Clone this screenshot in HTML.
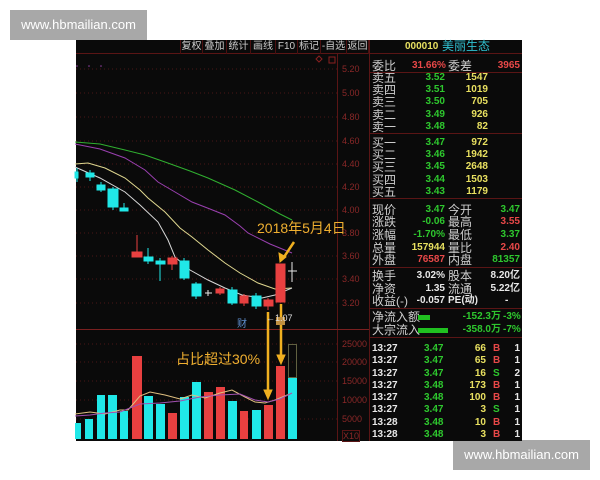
<!DOCTYPE html>
<html><head><meta charset="utf-8"><style>
*{margin:0;padding:0;box-sizing:border-box}
body{width:600px;height:480px;background:#fff;position:relative;overflow:hidden;font-family:"Liberation Sans","Noto Sans CJK SC",sans-serif}
.wm{position:absolute;background:#a8a8a8;color:#fff;font-size:13px;text-align:center;line-height:30px;width:137px;height:30px}
#panel{position:absolute;left:76px;top:40px;width:446px;height:401px;background:#0a0a0a}
.t{position:absolute;white-space:nowrap;font-size:10px;line-height:12px}
.l{color:#cfcfcf;font-size:12px;line-height:12px}
.n{font-weight:bold;font-size:10px}
.g{color:#2ec82e}.r{color:#e84848}.y{color:#e8e060}.w{color:#e8e8e8}
.ax{position:absolute;left:342px;font-size:9px;color:#8a2828;line-height:10px}
.tb{position:absolute;top:40px;height:14px;font-size:10px;color:#ccc;line-height:14px;border-right:1px solid #4a1010;text-align:center;white-space:nowrap;overflow:visible}
</style></head><body>
<div class="wm" style="left:10px;top:10px">www.hbmailian.com</div>
<div class="wm" style="left:453px;top:440px">www.hbmailian.com</div>
<div id="panel"></div>
<svg style="position:absolute;left:0;top:0" width="600" height="480">
<g stroke="#5a1515" stroke-width="1">
<line x1="76" y1="53.5" x2="522" y2="53.5"/>
<line x1="337.5" y1="53" x2="337.5" y2="441"/>
<line x1="369.5" y1="40" x2="369.5" y2="441"/>
<line x1="76" y1="329.5" x2="369" y2="329.5" stroke="#7a2020"/>
<line x1="370" y1="72.5" x2="522" y2="72.5"/>
<line x1="370" y1="133.5" x2="522" y2="133.5"/>
<line x1="370" y1="198.5" x2="522" y2="198.5"/>
<line x1="370" y1="267.5" x2="522" y2="267.5"/>
<line x1="370" y1="308.5" x2="522" y2="308.5"/>
<line x1="370" y1="337.5" x2="522" y2="337.5"/>
</g>
<g stroke="#4a1515" stroke-dasharray="1,3">
<line x1="76" y1="69" x2="337" y2="69"/><line x1="76" y1="93" x2="337" y2="93"/>
<line x1="76" y1="117" x2="337" y2="117"/><line x1="76" y1="141" x2="337" y2="141"/>
<line x1="76" y1="164" x2="337" y2="164"/><line x1="76" y1="187" x2="337" y2="187"/>
<line x1="76" y1="210" x2="337" y2="210"/><line x1="76" y1="233" x2="337" y2="233"/>
<line x1="76" y1="256" x2="337" y2="256"/><line x1="76" y1="279" x2="337" y2="279"/>
<line x1="76" y1="303" x2="337" y2="303"/>
<line x1="76" y1="344" x2="337" y2="344"/><line x1="76" y1="362" x2="337" y2="362"/>
<line x1="76" y1="381" x2="337" y2="381"/><line x1="76" y1="400" x2="337" y2="400"/>
<line x1="76" y1="419" x2="337" y2="419"/>
</g>
<g fill="#9040a0"><circle cx="77" cy="66" r="0.8"/><circle cx="89" cy="66" r="0.8"/><circle cx="101" cy="66" r="0.8"/></g>
<rect x="329" y="57" width="6" height="6" fill="none" stroke="#8a2020"/>
<path d="M319 56l3 3-3 3-3-3z" fill="none" stroke="#8a2020"/>
<polyline fill="none" stroke="#30b030" points="75,142 100,144 125,150 145,155 165,162 190,171 208,178 235,190 258,202 280,214 292,220"/>
<polyline fill="none" stroke="#9a40b0" points="75,144 100,149 125,158 145,170 158,182 175,192 192,202 210,209 225,215 240,226 248,233 270,244 292,253"/>
<polyline fill="none" stroke="#e0d890" points="75,164 88,163 105,168 125,178 140,190 148,198 165,212 180,228 192,237 208,250 225,263 240,273 258,283 275,289 292,288"/>
<polyline fill="none" stroke="#d8d8d8" points="75,167 100,178 125,192 140,205 158,222 168,240 175,257 190,270 208,280 225,288 242,295 262,298 275,295 292,288"/>
<g stroke-width="1">
<g stroke="#20e8e8" fill="#20e8e8">
<rect x="75" y="172" width="3" height="6"/><line x1="77" y1="168" x2="77" y2="182"/>
<rect x="86" y="173" width="8" height="4"/><line x1="90" y1="170" x2="90" y2="181"/>
<rect x="97" y="185" width="8" height="5"/><line x1="101" y1="182" x2="101" y2="192"/>
<rect x="108" y="189" width="10" height="18"/><line x1="113" y1="187" x2="113" y2="210"/>
<rect x="120" y="208" width="8" height="3"/><line x1="124" y1="203" x2="124" y2="211"/>
<rect x="144" y="257" width="9" height="4"/><line x1="148" y1="248" x2="148" y2="264"/>
<rect x="156" y="261" width="9" height="3"/><line x1="160" y1="258" x2="160" y2="281"/>
<rect x="180" y="261" width="9" height="17"/><line x1="184" y1="258" x2="184" y2="280"/>
<rect x="192" y="284" width="9" height="12"/><line x1="196" y1="282" x2="196" y2="299"/>
<rect x="228" y="290" width="9" height="13"/><line x1="232" y1="287" x2="232" y2="305"/>
<rect x="252" y="296" width="9" height="10"/><line x1="256" y1="293" x2="256" y2="309"/>
</g>
<g stroke="#e84040" fill="#e84040">
<rect x="132" y="252" width="10" height="5"/><line x1="137" y1="235" x2="137" y2="257"/>
<rect x="168" y="258" width="9" height="6"/><line x1="172" y1="256" x2="172" y2="270"/>
<rect x="216" y="289" width="8" height="4"/><line x1="220" y1="287" x2="220" y2="295"/>
<rect x="240" y="296" width="8" height="7"/><line x1="244" y1="294" x2="244" y2="306"/>
<rect x="264" y="300" width="9" height="6"/><line x1="268" y1="298" x2="268" y2="310"/>
<rect x="276" y="264" width="9" height="38"/>
</g>
<g stroke="#e8e8e8"><line x1="205" y1="293" x2="212" y2="293"/><line x1="208" y1="290" x2="208" y2="296"/>
<line x1="288" y1="271" x2="297" y2="271"/><line x1="292" y1="262" x2="292" y2="282"/></g>
</g>
<g fill="#20e8e8">
<rect x="75" y="423" width="6" height="16"/><rect x="85" y="419" width="8" height="20"/>
<rect x="97" y="395" width="8" height="44"/><rect x="108" y="395" width="9" height="44"/>
<rect x="120" y="411" width="8" height="28"/><rect x="144" y="396" width="9" height="43"/>
<rect x="156" y="404" width="9" height="35"/><rect x="180" y="397" width="9" height="42"/>
<rect x="192" y="382" width="9" height="57"/><rect x="228" y="401" width="9" height="38"/>
<rect x="252" y="410" width="9" height="29"/><rect x="288" y="377" width="9" height="62"/>
</g>
<g fill="#e84040">
<rect x="132" y="356" width="10" height="83"/><rect x="168" y="413" width="9" height="26"/>
<rect x="204" y="392" width="9" height="47"/><rect x="216" y="387" width="9" height="52"/>
<rect x="240" y="411" width="8" height="28"/><rect x="264" y="405" width="9" height="34"/>
<rect x="276" y="366" width="9" height="73"/>
</g>
<rect x="288.5" y="344.5" width="8" height="33" fill="none" stroke="#606040"/>
<polyline fill="none" stroke="#e0c080" points="75,414 90,412 105,414 120,410 128,410 140,396 150,392 165,395 180,399 192,395 205,398 220,393 232,390 245,397 255,402 265,403 275,400 292,393"/>
<polyline fill="none" stroke="#a050b0" points="75,416 90,415 105,413 120,412 130,408 140,404 160,403 180,401 200,397 220,395 240,394 255,400 268,402 280,399 292,393"/>
<g stroke="#f0b020" fill="#f0b020" stroke-width="2.5">
<line x1="294" y1="242" x2="284" y2="257"/><path d="M280 262l-1-9 7 4z" stroke-width="1"/>
<line x1="268" y1="312" x2="268" y2="392"/><path d="M264 390l4 9 4-9z" stroke-width="1"/>
<line x1="281" y1="304" x2="281" y2="357"/><path d="M277 355l4 9 4-9z" stroke-width="1"/>
</g>
<rect x="276" y="317" width="9" height="8" fill="#c09040"/>
</svg>
<div class="t" style="left:257px;top:219px;font-size:14px;line-height:18px;color:#f0b030">2018年5月4日</div>
<div class="t" style="left:176px;top:350px;font-size:14px;line-height:18px;color:#f0b030">占比超过30%</div>
<div class="t" style="left:237px;top:319px;color:#6090d0;font-size:10px">财</div>
<div class="t" style="left:266px;top:312px;color:#ddd;font-size:9px">←1.07</div>
<div class="tb" style="left:180px;width:23px;border-left:1px solid #4a1010">复权</div><div class="tb" style="left:203px;width:24px">叠加</div>
<div class="tb" style="left:227px;width:24px">统计</div><div class="tb" style="left:251px;width:25px">画线</div>
<div class="tb" style="left:276px;width:22px">F10</div><div class="tb" style="left:298px;width:23px">标记</div>
<div class="tb" style="left:321px;width:26px">-自选</div><div class="tb" style="left:347px;width:22px">返回</div>
<div class="ax" style="top:64px">5.20</div><div class="ax" style="top:88px">5.00</div>
<div class="ax" style="top:112px">4.80</div><div class="ax" style="top:136px">4.60</div>
<div class="ax" style="top:159px">4.40</div><div class="ax" style="top:182px">4.20</div>
<div class="ax" style="top:205px">4.00</div><div class="ax" style="top:228px">3.80</div>
<div class="ax" style="top:251px">3.60</div><div class="ax" style="top:274px">3.40</div>
<div class="ax" style="top:298px">3.20</div>
<div class="ax" style="top:339px">25000</div><div class="ax" style="top:357px">20000</div>
<div class="ax" style="top:376px">15000</div><div class="ax" style="top:395px">10000</div>
<div class="ax" style="top:414px">5000</div><div class="ax" style="top:430px;border:1px solid #5a1515">X10</div>
<div class="t n y" style="left:405px;top:41px">000010</div>
<div class="t" style="left:442px;top:40px;font-size:12px;color:#30c0d0">美丽生态</div>
<div class="t l" style="left:372px;top:60px">委比</div><div class="t n r" style="left:412px;top:60px">31.66%</div>
<div class="t l" style="left:448px;top:60px">委差</div><div class="t n r" style="width:40px;text-align:right;left:480px;top:60px">3965</div>
<div style="position:absolute;left:372px;top:72px;width:150px">
<div class="t l" style="top:0">卖五</div><div class="t l" style="top:12px">卖四</div><div class="t l" style="top:24px">卖三</div><div class="t l" style="top:37px">卖二</div><div class="t l" style="top:49px">卖一</div>
<div class="t l" style="top:65px">买一</div><div class="t l" style="top:77px">买二</div><div class="t l" style="top:89px">买三</div><div class="t l" style="top:102px">买四</div><div class="t l" style="top:114px">买五</div>
</div>
<div style="position:absolute;left:405px;top:72px;width:40px;text-align:right" class="n g">
<div style="height:12.2px;line-height:12px">3.52</div><div style="height:12.2px;line-height:12px">3.51</div><div style="height:12.2px;line-height:12px">3.50</div><div style="height:12.2px;line-height:12px">3.49</div><div style="height:12.2px;line-height:12px">3.48</div>
<div style="height:4px"></div>
<div style="height:12.2px;line-height:12px">3.47</div><div style="height:12.2px;line-height:12px">3.46</div><div style="height:12.2px;line-height:12px">3.45</div><div style="height:12.2px;line-height:12px">3.44</div><div style="height:12.2px;line-height:12px">3.43</div>
</div>
<div style="position:absolute;left:448px;top:72px;width:40px;text-align:right" class="n y">
<div style="height:12.2px;line-height:12px">1547</div><div style="height:12.2px;line-height:12px">1019</div><div style="height:12.2px;line-height:12px">705</div><div style="height:12.2px;line-height:12px">926</div><div style="height:12.2px;line-height:12px">82</div>
<div style="height:4px"></div>
<div style="height:12.2px;line-height:12px">972</div><div style="height:12.2px;line-height:12px">1942</div><div style="height:12.2px;line-height:12px">2648</div><div style="height:12.2px;line-height:12px">1503</div><div style="height:12.2px;line-height:12px">1179</div>
</div>
<div class="t l" style="left:372px;top:204px">现价</div><div class="t n g" style="left:405px;width:40px;text-align:right;top:204px">3.47</div>
<div class="t l" style="left:448px;top:204px">今开</div><div class="t n g" style="left:480px;width:40px;text-align:right;top:204px">3.47</div>
<div class="t l" style="left:372px;top:216px">涨跌</div><div class="t n g" style="left:405px;width:40px;text-align:right;top:216px">-0.06</div>
<div class="t l" style="left:448px;top:216px">最高</div><div class="t n r" style="left:480px;width:40px;text-align:right;top:216px">3.55</div>
<div class="t l" style="left:372px;top:229px">涨幅</div><div class="t n g" style="left:395px;width:50px;text-align:right;top:229px">-1.70%</div>
<div class="t l" style="left:448px;top:229px">最低</div><div class="t n g" style="left:480px;width:40px;text-align:right;top:229px">3.37</div>
<div class="t l" style="left:372px;top:242px">总量</div><div class="t n y" style="left:395px;width:50px;text-align:right;top:242px">157944</div>
<div class="t l" style="left:448px;top:242px">量比</div><div class="t n r" style="left:480px;width:40px;text-align:right;top:242px">2.40</div>
<div class="t l" style="left:372px;top:254px">外盘</div><div class="t n r" style="left:395px;width:50px;text-align:right;top:254px">76587</div>
<div class="t l" style="left:448px;top:254px">内盘</div><div class="t n g" style="left:470px;width:50px;text-align:right;top:254px">81357</div>
<div class="t l" style="left:372px;top:270px">换手</div><div class="t n w" style="left:395px;width:50px;text-align:right;top:270px">3.02%</div>
<div class="t l" style="left:448px;top:270px">股本</div><div class="t n w" style="left:470px;width:50px;text-align:right;top:270px">8.20亿</div>
<div class="t l" style="left:372px;top:283px">净资</div><div class="t n w" style="left:395px;width:50px;text-align:right;top:283px">1.35</div>
<div class="t l" style="left:448px;top:283px">流通</div><div class="t n w" style="left:470px;width:50px;text-align:right;top:283px">5.22亿</div>
<div class="t l" style="left:372px;top:295px">收益(-)</div><div class="t n w" style="left:395px;width:50px;text-align:right;top:295px">-0.057</div>
<div class="t n w" style="left:448px;top:295px">PE(动)</div><div class="t n w" style="left:505px;top:295px">-</div>
<div class="t l" style="left:372px;top:311px">净流入额</div><div style="position:absolute;left:418px;top:315px;width:12px;height:5px;background:#20c020"></div>
<div class="t n g" style="left:455px;width:46px;text-align:right;top:311px">-152.3万</div><div class="t n g" style="left:503px;top:311px">-3%</div>
<div class="t l" style="left:372px;top:324px">大宗流入</div><div style="position:absolute;left:418px;top:328px;width:30px;height:5px;background:#20c020"></div>
<div class="t n g" style="left:455px;width:46px;text-align:right;top:324px">-358.0万</div><div class="t n g" style="left:503px;top:324px">-7%</div>
<div style="position:absolute;left:372px;top:343px;width:150px;font-size:10px;font-weight:bold;line-height:12.3px">
<div style="position:relative;height:12.3px"><span class="w">13:27</span><span class="g" style="position:absolute;left:52px">3.47</span><span class="y" style="position:absolute;right:36px">66</span><span class="r" style="position:absolute;left:121px">B</span><span class="w" style="position:absolute;right:2px">1</span></div>
<div style="position:relative;height:12.3px"><span class="w">13:27</span><span class="g" style="position:absolute;left:52px">3.47</span><span class="y" style="position:absolute;right:36px">65</span><span class="r" style="position:absolute;left:121px">B</span><span class="w" style="position:absolute;right:2px">1</span></div>
<div style="position:relative;height:12.3px"><span class="w">13:27</span><span class="g" style="position:absolute;left:52px">3.47</span><span class="y" style="position:absolute;right:36px">16</span><span class="g" style="position:absolute;left:121px">S</span><span class="w" style="position:absolute;right:2px">2</span></div>
<div style="position:relative;height:12.3px"><span class="w">13:27</span><span class="g" style="position:absolute;left:52px">3.48</span><span class="y" style="position:absolute;right:36px">173</span><span class="r" style="position:absolute;left:121px">B</span><span class="w" style="position:absolute;right:2px">1</span></div>
<div style="position:relative;height:12.3px"><span class="w">13:27</span><span class="g" style="position:absolute;left:52px">3.48</span><span class="y" style="position:absolute;right:36px">100</span><span class="r" style="position:absolute;left:121px">B</span><span class="w" style="position:absolute;right:2px">1</span></div>
<div style="position:relative;height:12.3px"><span class="w">13:27</span><span class="g" style="position:absolute;left:52px">3.47</span><span class="y" style="position:absolute;right:36px">3</span><span class="g" style="position:absolute;left:121px">S</span><span class="w" style="position:absolute;right:2px">1</span></div>
<div style="position:relative;height:12.3px"><span class="w">13:28</span><span class="g" style="position:absolute;left:52px">3.48</span><span class="y" style="position:absolute;right:36px">10</span><span class="r" style="position:absolute;left:121px">B</span><span class="w" style="position:absolute;right:2px">1</span></div>
<div style="position:relative;height:12.3px"><span class="w">13:28</span><span class="g" style="position:absolute;left:52px">3.48</span><span class="y" style="position:absolute;right:36px">3</span><span class="r" style="position:absolute;left:121px">B</span><span class="w" style="position:absolute;right:2px">1</span></div>
</div>
</body></html>
